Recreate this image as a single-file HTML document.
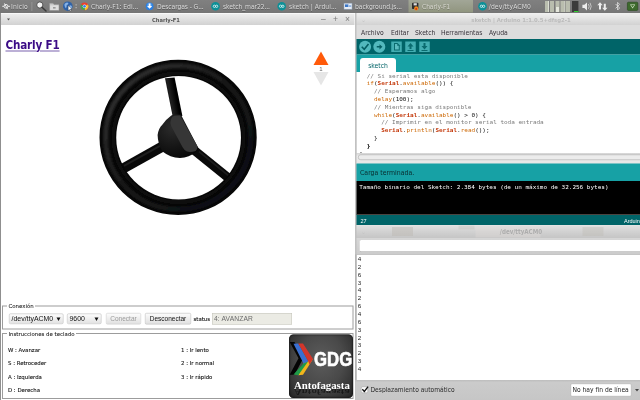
<!DOCTYPE html>
<html lang="es">
<head>
<meta charset="utf-8">
<title>Charly-F1</title>
<style>
html,body{margin:0;padding:0;width:640px;height:400px;overflow:hidden;background:#7d7d7d;}
#root{position:absolute;left:0;top:0;width:1280px;height:800px;filter:blur(.55px);transform:scale(.5);transform-origin:0 0;overflow:hidden;
  font-family:"Liberation Sans","DejaVu Sans",sans-serif;font-size:13px;color:#222;background:#7d7d7d;}
#root *{box-sizing:border-box;}
.abs{position:absolute;}
/* ---------- top panel ---------- */
#panel{left:0;top:0;width:1280px;height:26px;background:linear-gradient(#808080,#767676);}
#panel .t{position:absolute;top:4px;font-family:'DejaVu Sans Condensed','DejaVu Sans','Liberation Sans',sans-serif;font-size:13.5px;line-height:18px;color:#dcdcdc;white-space:nowrap;text-shadow:0 1px 1px rgba(0,0,0,.3);letter-spacing:0;}
#panel .ic{position:absolute;top:5px;width:16px;height:16px;border-radius:50%;}
/* ---------- left window ---------- */
#lw{left:0px;top:26px;width:711px;height:774px;background:#fff;border-left:2px solid #8f8f8f;}
.tbar{position:absolute;left:0;top:0;right:0;height:24px;background:linear-gradient(#efefef,#d2d2d2);border-top:1px solid #fafafa;}
.tbar .title{position:absolute;left:0;right:0;top:4px;text-align:center;font-family:'DejaVu Sans Condensed','DejaVu Sans','Liberation Sans',sans-serif;font-size:11.5px;font-weight:bold;color:#555;line-height:16px;}

.wb{top:0;font-size:17px;line-height:22px;color:#7a7a7a;font-weight:normal;}
.h1{font-family:'DejaVu Sans Condensed','DejaVu Sans','Liberation Sans',sans-serif;font-size:23.2px;line-height:30px;font-weight:bold;color:#3b0b86;text-decoration:underline;text-decoration-thickness:2px;text-decoration-color:#7a62ad;text-underline-offset:3px;letter-spacing:-.35px;}
.fs{margin:0;padding:0;border:2px groove #c8c8c8;border:2px solid #9c9c9c;}
.fs legend{font-family:'DejaVu Sans Condensed','DejaVu Sans','Liberation Sans',sans-serif;font-size:12px;line-height:14px;padding:0 3px;margin-left:8px;color:#1c1c1c;background:#fff;-webkit-text-stroke:.15px #1c1c1c;}
.sel{height:21px;border:1px solid #b4b4b4;border-radius:3px;background:linear-gradient(#fdfdfd,#e2e2e2);font-size:13.9px;line-height:19px;padding-left:4px;color:#111;white-space:nowrap;}
.sel i{position:absolute;right:5px;top:7px;width:0;height:0;border-left:4px solid transparent;border-right:4px solid transparent;border-top:7px solid #111;}
.btn{height:23px;border:1px solid #b0b0b0;border-radius:3px;background:linear-gradient(#fcfcfc,#e0e0e0);font-size:13px;line-height:21px;text-align:center;color:#111;white-space:nowrap;}
.btn.dis{color:#9a9a9a;border-color:#c4c4c4;}
.inp{height:23px;border:1px solid #c2c2b8;background:#ebebe4;font-size:13.4px;line-height:21px;padding-left:3px;color:#6a6a6a;white-space:nowrap;letter-spacing:.25px;}
.ins{font-family:'DejaVu Sans Condensed','DejaVu Sans','Liberation Sans',sans-serif;font-size:12px;line-height:16px;color:#141414;white-space:nowrap;-webkit-text-stroke:.22px #141414;}
#gdg{border-radius:9px;background:radial-gradient(ellipse at 50% 40%,#5c5c5c 0%,#494949 50%,#303030 85%,#1f1f1f 100%);overflow:hidden;box-shadow:inset 0 0 3px 1px #111;}

#menu{background:#dddddd;}
#menu span{position:absolute;top:6px;font-family:'DejaVu Sans Condensed','DejaVu Sans','Liberation Sans',sans-serif;font-size:13.5px;line-height:16px;color:#353038;}
#code{left:719px;top:143.5px;margin:0;font-family:"DejaVu Sans Mono","Liberation Mono",monospace;font-size:12px;line-height:15.62px;color:#111;}
#code{-webkit-text-stroke:0;} #code .c{color:#7a7a7a;-webkit-text-stroke:0;} #code .k{color:#cc6600;} #code b{color:#c4390b;font-weight:bold;-webkit-text-stroke:0;}
#cons{left:718.5px;top:365px;margin:0;font-family:"DejaVu Sans Mono","Liberation Mono",monospace;font-size:12px;line-height:16px;color:#fff;}
#ser{left:715.5px;top:510.5px;margin:0;font-family:"Liberation Sans",sans-serif;font-size:12.5px;line-height:15.71px;color:#222;}
</style>
</head>
<body>
<div id="root">

<!-- TOP PANEL -->
<div id="panel" class="abs">
  <div class="abs" style="left:817px;top:0;width:129px;height:25px;background:linear-gradient(#a2a697,#90957f);"></div>
  <svg class="abs" style="left:0;top:0" width="1280" height="26" viewBox="0 0 640 13">
    <!-- xfce/xubuntu logo -->
    <g fill="none" stroke="#f2f2f2" stroke-width=".9"><circle cx="6" cy="6.3" r="1.9"/><path d="M2.2,6.3 H4 M8,6.3 H10 M4.4,3.4 L7.6,9.2"/></g>
    <rect x="31.5" y="2" width=".8" height="9" fill="#9a9a9a"/>
    <!-- magnifier -->
    <circle cx="39.8" cy="5" r="3.1" fill="#f4f4f4" stroke="#4a4a4a" stroke-width=".9"/><path d="M42,7.3 L46,11" stroke="#3a3a3a" stroke-width="1.5" stroke-linecap="round"/>
    <!-- folder -->
    <path d="M49.5,3.2 h3.5 l1,1.2 h5 v6 h-9.5 z" fill="#c9c9c9" stroke="#8e8e8e" stroke-width=".5"/><rect x="50.2" y="5.4" width="8.2" height="4.6" fill="#dedede"/><rect x="53" y="7" width="2.6" height="1.6" fill="#9a9a9a"/>
    <!-- globe -->
    <circle cx="67.8" cy="6.2" r="4.8" fill="#2f62a8"/><path d="M64.5,4 q2,-2.4 4,-1 q-.5,2 -2,2.4 q.6,1.6 -.8,2.8 q-1.6,-1.4 -1.2,-4.2z M69.5,5.5 q2,-.6 2.6,1.4 q-.8,2 -2.2,2.4 q-.9,-1.8 -.4,-3.8z" fill="#86b2e6"/><path d="M68.2,5.6 l3.6,3.4 -1.6,.1 .9,1.7 -.8,.4 -.9,-1.7 -1.2,1z" fill="#fff" stroke="#222" stroke-width=".3"/>
    <rect x="75.6" y="4.4" width="1" height="1" fill="#d8d8d8"/><rect x="75.6" y="7.2" width="1" height="1" fill="#d8d8d8"/>
    <!-- chrome -->
    <circle cx="84.5" cy="6.3" r="3.9" fill="#e8412f"/><path d="M84.5,6.3 L81.1,4.4 A3.9,3.9 0 0,0 85,10.2 Z" fill="#3aa757"/><path d="M84.5,6.3 L85,10.2 A3.9,3.9 0 0,0 87.9,4.4 Z" fill="#f7c52c"/><circle cx="84.5" cy="6.3" r="1.8" fill="#fff"/><circle cx="84.5" cy="6.3" r="1.4" fill="#3b7ded"/>
    <!-- download -->
    <circle cx="149.6" cy="6.3" r="3.9" fill="#2c7fe0"/><circle cx="149.6" cy="5.4" r="2.6" fill="#5aa6f4" opacity=".6"/><path d="M148.7,3.6 h1.8 v2.4 h1.6 l-2.5,2.8 -2.5,-2.8 h1.6z" fill="#fff"/>
    <!-- arduino icons -->
    <g id="ard"><circle cx="215.5" cy="6.3" r="4.3" fill="#0c9097"/><path d="M213.2,6.3 a1.1,1.1 0 1,1 2.3,0 a1.1,1.1 0 1,0 2.3,0 a1.1,1.1 0 1,0 -2.3,0 a1.1,1.1 0 1,1 -2.3,0z" fill="none" stroke="#fff" stroke-width=".7"/></g>
    <use href="#ard" x="66.2"/><use href="#ard" x="267"/>
    <!-- background.js file icon -->
    <rect x="344" y="3.2" width="8" height="6" fill="#e8eef6" stroke="#8fa3bd" stroke-width=".5"/><rect x="345" y="4.4" width="3.4" height="2.6" fill="#3c78c8"/><rect x="349" y="5.6" width="2.2" height=".9" fill="#3c78c8"/>
    <!-- charly icon -->
    <rect x="412" y="2.8" width="6.4" height="6.2" rx=".8" fill="#2e2e2e"/><rect x="413.6" y="3.2" width="3.2" height="2.2" fill="#dcdcdc"/><circle cx="416.2" cy="8.4" r="2.1" fill="#f08a1a"/><circle cx="416.2" cy="8.9" r=".9" fill="#c8281e"/>
    <!-- system monitors -->
    <g fill="#b9bdae"><rect x="545" y="1" width="4" height="11"/><rect x="550" y="1" width="4" height="11"/><rect x="555.5" y="1" width="4" height="11"/><rect x="560.5" y="1" width="4" height="11"/><rect x="565.5" y="1" width="4.5" height="11"/></g>
    <g fill="#e4e6dc"><rect x="556" y="7" width="3" height="5"/><rect x="548.2" y="1" width=".8" height="11"/><rect x="564" y="1" width=".6" height="11"/></g>
    <rect x="572" y="1" width="6.4" height="11" fill="#3b3b3b"/><rect x="574" y="11" width="4.4" height="1" fill="#2fd02f"/>
    <!-- volume -->
    <path d="M582.4,4.8 h2 l2.6,-2.4 v8 l-2.6,-2.4 h-2z" fill="#ececec"/><path d="M588.4,4 q1.6,2.4 0,4.8 M590,2.8 q2.4,3.6 0,7.2" fill="none" stroke="#d6d6d6" stroke-width=".8"/>
    <!-- network arrows -->
    <path d="M600,2.2 l2.7,3 h-1.7 v4.2 h-2 v-4.2 h-1.7z" fill="#ededed"/><path d="M604.8,10.8 l-2.7,-3 h1.7 v-4 h2 v4 h1.7z" fill="#ededed"/>
    <!-- bluetooth -->
    <path d="M615.6,4 l4,4 -2,2 v-7.6 l2,2 -4,4" fill="none" stroke="#e4e4e4" stroke-width=".8"/>
    <!-- green battery/indicator -->
    <rect x="627.4" y="2.2" width="10.4" height="8.2" rx="1" fill="#3d6a2c" stroke="#27471c" stroke-width=".6"/><path d="M630,4.6 h5.2 l-2.6,4z" fill="#dfe9d6"/><path d="M631,4.9 h3.2 l-1.6,2.5z" fill="#4a7a36"/>
  </svg>

  <span class="t" style="left:22px;letter-spacing:.25px">Inicio</span>
  <span class="t" style="left:182px;letter-spacing:-.12px">Charly-F1: Edi...</span>
  <span class="t" style="left:314px;letter-spacing:-.2px">Descargas - G...</span>
  <span class="t" style="left:446px;letter-spacing:-.2px">sketch_mar22...</span>
  <span class="t" style="left:578px;letter-spacing:.05px">sketch | Ardui...</span>
  <span class="t" style="left:710px;letter-spacing:-.2px">background.js...</span>
  <span class="t" style="left:844px;letter-spacing:-.22px;color:#d6d6ce;text-shadow:0 1px 1px rgba(0,0,0,.2)">Charly-F1</span>
  <span class="t" style="left:977.5px;letter-spacing:.2px">/dev/ttyACM0</span>
</div>

<!-- LEFT WINDOW -->
<div id="lw" class="abs"></div>
<div class="tbar abs" style="left:2px;top:26px;width:708px;"><div class="title" style="padding-right:48px">Charly-F1</div>
  <span class="abs" style="left:11.5px;top:10px;width:0;height:0;border-left:3.5px solid transparent;border-right:3.5px solid transparent;border-top:4.5px solid #555;"></span>
  <span class="abs wb" style="left:640px;">&#8211;</span><span class="abs wb" style="left:664px;">+</span><span class="abs wb" style="left:688px;">&#215;</span>
</div>

<a class="abs h1" style="left:11px;top:74.5px;">Charly F1</a>

<!-- steering wheel -->
<svg class="abs" style="left:180px;top:100px;" width="360" height="350" viewBox="90 50 180 175">
  <defs>
    <linearGradient id="rhl" gradientUnits="userSpaceOnUse" x1="115" y1="75" x2="245" y2="205"><stop offset="0" stop-color="#303030"/><stop offset=".5" stop-color="#161616"/><stop offset="1" stop-color="#0c0e16"/></linearGradient><filter id="soft" x="-5%" y="-5%" width="110%" height="110%"><feGaussianBlur stdDeviation=".9"/></filter><radialGradient id="hubg" cx=".35" cy=".3" r=".8"><stop offset="0" stop-color="#2b2b2b"/><stop offset=".6" stop-color="#141414"/><stop offset="1" stop-color="#060606"/></radialGradient>
    <linearGradient id="spk" gradientUnits="userSpaceOnUse" x1="165" y1="96" x2="176" y2="94"><stop offset="0" stop-color="#000"/><stop offset=".45" stop-color="#1f1f1f"/><stop offset="1" stop-color="#000"/></linearGradient>
  </defs>
  <!-- spokes -->
  <path d="M165,78.2 L174.6,77.6 L182.4,116 L172.8,117 Z" fill="url(#spk)"/>
  <line x1="166" y1="144.5" x2="122" y2="169.1" stroke="#090909" stroke-width="10.2"/>
  <line x1="160" y1="145.8" x2="124" y2="165.9" stroke="#1e1e1e" stroke-width="2"/>
  <line x1="192" y1="148.4" x2="231" y2="180.1" stroke="#090909" stroke-width="9"/>
  <line x1="199" y1="151.6" x2="229" y2="176" stroke="#1c1c1c" stroke-width="1.8"/>
  <!-- ring -->
  <path fill="#070707" fill-rule="evenodd" d="M99.5,137.4 a78.6,77.6 0 1,0 157.2,0 a78.6,77.6 0 1,0 -157.2,0 Z M116.2,137.7 a62.4,61.7 0 1,1 124.8,0 a62.4,61.7 0 1,1 -124.8,0 Z"/>
  <ellipse cx="178.2" cy="137.5" rx="72.6" ry="71.7" fill="none" stroke="url(#rhl)" stroke-width="5" filter="url(#soft)"/>
  <ellipse cx="178.5" cy="137.7" rx="65.2" ry="64.5" fill="none" stroke="#121212" stroke-width="2.4" filter="url(#soft)"/>
  <!-- hub -->
  <path fill="url(#hubg)" d="M171.3,115.6 Q173,114 181,114.8 L198.6,148.6 Q197.5,151.5 196.6,151.8 Q189,157.8 180,158.1 Q170,157.6 162.5,151.6 Q157.8,144 157.6,135 Q158.6,128 162.5,124.5 Q166,119.5 171.3,115.6 Z"/>
  <path fill="#363636" d="M172.4,116.8 Q174,115.2 180,115.4 L197.6,146.6 Q197.4,149.6 195.6,150.9 Q191,152.4 187,151.6 Q184,150 182.6,147.2 L171.2,126.2 Q169.8,122 170.9,120 Q171.2,118 172.4,116.8 Z"/>
</svg>

<!-- speed indicator -->
<svg class="abs" style="left:620px;top:100px;" width="44" height="76" viewBox="0 0 44 76">
  <polygon points="22,3 37,30 7,30" fill="#ff5a0a"/>
  <polygon points="7,44 37,44 22,71" fill="#e6e6e6"/>
  <text x="22" y="41.5" font-size="12" text-anchor="middle" fill="#666" font-family="Liberation Sans, sans-serif">1</text>
</svg>

<!-- Conexion fieldset -->
<fieldset class="abs fs" style="left:4px;top:605px;width:703px;height:54px;"><legend>Conexi&oacute;n</legend></fieldset>
<div class="abs sel" style="left:18px;top:627px;width:109px;">/dev/ttyACM0<i></i></div>
<div class="abs sel" style="left:134px;top:627px;width:69px;">9600<i></i></div>
<div class="abs btn dis" style="left:212px;top:626px;width:70px;">Conectar</div>
<div class="abs btn" style="left:290px;top:626px;width:92px;">Desconectar</div>
<span class="abs ins" style="left:387px;top:630px;">status</span>
<div class="abs inp" style="left:424px;top:626px;width:160px;">4: AVANZAR</div>

<!-- Instrucciones fieldset -->
<fieldset class="abs fs" style="left:4px;top:660px;width:703px;height:138px;"><legend>Instrucciones de teclado</legend></fieldset>
<span class="abs ins" style="left:16px;top:691px;">W : Avanzar</span>
<span class="abs ins" style="left:16px;top:718px;">S : Retroceder</span>
<span class="abs ins" style="left:16px;top:745px;">A : Izquierda</span>
<span class="abs ins" style="left:16px;top:772px;">D : Derecha</span>
<span class="abs ins" style="left:362px;top:691px;">1 : Ir lento</span>
<span class="abs ins" style="left:362px;top:718px;">2 : Ir normal</span>
<span class="abs ins" style="left:362px;top:745px;">3 : Ir r&aacute;pido</span>

<!-- GDG logo -->
<div class="abs" id="gdg" style="left:578px;top:669px;width:128px;height:127px;">
  <svg width="128" height="127" viewBox="0 0 128 127" style="position:absolute;left:0;top:0">
    <polygon points="1.4,15 11,15 28.5,47.6 11,80.5 1.4,80.5 19,47.6" fill="#050505"/>
    <polygon points="29,58 38.5,53.5 48,49 28,80.5 18.5,81.5" fill="#f1b51c"/>
    <polygon points="29,58 38.5,53.5 18.5,81.5 9,80" fill="#1f9a48"/>
    <polygon points="9,18.5 18.5,18 38.5,53.5 29,58" fill="#3a6fd0"/>
    <polygon points="18.5,18 28,18 48,49 41,60 38.5,53.5" fill="#d3362b"/>
  </svg>
  <span class="abs" style="left:50px;top:29px;font-size:39px;line-height:40px;font-weight:bold;color:#fff;transform:scaleX(.86);transform-origin:0 0;white-space:nowrap;-webkit-text-stroke:1.2px #fff;">GDG</span>
  <span class="abs" style="left:10px;top:88px;font-size:22.5px;line-height:26px;font-weight:bold;color:rgba(0,0,0,.55);font-family:'Liberation Serif',serif;transform:scale(.96,-.75);transform-origin:0 21px;white-space:nowrap;" aria-hidden="true">Antofagasta</span>
  <span class="abs" style="left:10px;top:88px;font-size:22.5px;line-height:26px;font-weight:bold;color:#fff;font-family:'Liberation Serif',serif;transform:scaleX(.96);transform-origin:0 0;white-space:nowrap;">Antofagasta</span>
</div>

<!-- RIGHT: ARDUINO WINDOW -->
<div class="abs" style="left:709px;top:26px;width:4px;height:774px;background:linear-gradient(90deg,#fff,#b5b5b5 60%,#c9c9c9);"></div>
<div class="abs" id="rw" style="left:713px;top:26px;width:567px;height:774px;background:#dcdcdc;"></div>
<div class="tbar abs" style="left:713px;top:26px;width:567px;"><div class="title" style="color:#bbbbbb;width:658px;right:auto;font-size:11.9px;">sketch | Arduino 1:1.0.5+dfsg2-1</div>
  <span class="abs" style="left:9px;top:5px;font-size:12px;color:#c4c4c4;">&#8964;</span>
</div>
<div class="abs" id="menu" style="left:713px;top:50px;width:567px;height:28px;">
  <span style="left:9px">Archivo</span><span style="left:69px">Editar</span><span style="left:117px">Sketch</span><span style="left:169px">Herramientas</span><span style="left:265px">Ayuda</span>
</div>
<div class="abs" style="left:713px;top:78px;width:567px;height:31px;background:#006468;"></div>
<svg class="abs" style="left:713px;top:78px;" width="160" height="32" viewBox="0 0 160 32">
  <g fill="#52b9bd">
    <circle cx="17.2" cy="15.6" r="12"/><circle cx="45.6" cy="15.6" r="12"/>
  </g>
  <g fill="#43aeb2">
    <rect x="69.5" y="5" width="21" height="21"/><rect x="97.5" y="5" width="21" height="21"/><rect x="125.5" y="5" width="21" height="21"/>
  </g>
  <g fill="none" stroke="#045e62" stroke-width="3.2">
    <path d="M10.5,15.5 L15.5,20.5 L24,10"/>
    <path d="M40.5,15.6 H48"/>
  </g>
  <path d="M46,10.4 L51.8,15.6 L46,20.8 Z" fill="#045e62"/>
  <g fill="#0a6b6f">
    <path d="M75,8 h7 l4.5,4.5 v10.5 h-11.5 z"/>
    <path d="M108,8 l6,7 h-4 v5 h-4 v-5 h-4 z M102,22 h12 v2 h-12 z"/>
    <path d="M136,21 l6,-7 h-4 v-6 h-4 v6 h-4 z M130,22 h12 v2 h-12 z"/>
  </g>
  <path d="M77,10 h4.5 v3.5 h3 v7.5 h-7.500 z" fill="#5cbcc0"/>
</svg>
<div class="abs" style="left:713px;top:109px;width:567px;height:35px;background:#17a1a5;"></div>
<div class="abs" style="left:720px;top:116px;width:72px;height:30px;background:#fff;border-radius:6px 6px 0 0;font-family:'DejaVu Sans Condensed','DejaVu Sans','Liberation Sans',sans-serif;font-size:13.5px;line-height:28px;text-align:center;color:#006468;">sketch</div>
<div class="abs" style="left:713px;top:144px;width:567px;height:162px;background:#fff;border-left:1px solid #c4c4c4;"></div>
<pre class="abs" id="code">  <span class="c">// Si serial esta disponible</span>
  <span class="k">if</span>(<b>Serial</b>.<span class="k">available</span>()) {
    <span class="c">// Esperamos algo</span>
    <span class="k">delay</span>(100);
    <span class="c">// Mientras siga disponible</span>
    <span class="k">while</span>(<b>Serial</b>.<span class="k">available</span>() &gt; 0) {
      <span class="c">// Imprimir en el monitor serial toda entrada</span>
      <b>Serial</b>.<span class="k">println</span>(<b>Serial</b>.<span class="k">read</span>());
    }
  <b style="color:#000">}</b>
}</pre>
<div class="abs" style="left:713px;top:306px;width:567px;height:22px;background:linear-gradient(#d4d4d4,#ececec 30%,#e6e6e6);"></div>
<div class="abs" style="left:716px;top:309px;width:580px;height:11px;background:#ececec;border:1.5px solid #9f9f9f;border-radius:6px;"></div>
<div class="abs" style="left:713px;top:327px;width:567px;height:35px;background:#17a1a5;font-family:'DejaVu Sans Condensed','DejaVu Sans','Liberation Sans',sans-serif;font-size:13.8px;line-height:35px;padding-left:7px;color:#0a2c2e;">Carga terminada.</div>
<div class="abs" style="left:713px;top:362px;width:567px;height:66px;background:#000;"></div>
<pre class="abs" id="cons">Tama&ntilde;o binario del Sketch: 2.384 bytes (de un m&aacute;ximo de 32.256 bytes)</pre>
<div class="abs" style="left:713px;top:428px;width:567px;height:22px;background:#006468;border-top:2px solid #3a3a3a;font-size:11px;line-height:22px;color:#fff;padding-left:8px;border-top-color:#4a4440;">27<span style="position:absolute;left:535px;white-space:nowrap;">Arduino Uno on /dev/ttyACM0</span></div>

<!-- SERIAL MONITOR -->
<div class="tbar abs" style="left:713px;top:450px;width:567px;height:27px;background:linear-gradient(#e0e0e0,#d2d2d2 45%,#c4c4c4);border-top-color:#e8e8e8;"><div class="title" style="color:#adadad;width:658px;right:auto;top:5px;font-size:12.4px;z-index:2;">/dev/ttyACM0</div>
  <span class="abs" style="left:9px;top:5px;font-size:12px;color:#c4c4c4;">&#8964;</span>
  <span class="abs" style="left:71px;top:3px;width:42px;height:18px;background:rgba(190,186,180,.5);"></span>
  <span class="abs" style="left:204px;top:0px;width:32px;height:8px;background:rgba(190,186,180,.3);"></span><span class="abs" style="left:238px;top:2px;width:130px;height:22px;background:rgba(225,222,218,.35);"></span>
  <span class="abs" style="left:452px;top:3px;width:42px;height:18px;background:rgba(190,186,180,.38);"></span>
</div>
<div class="abs" style="left:713px;top:476px;width:567px;height:34px;background:linear-gradient(#d6d6d6,#cbcbcb);"></div>
<div class="abs" style="left:719px;top:479px;width:570px;height:24.5px;background:#fff;border:1px solid #a4a4a4;border-top-color:#8c8c8c;border-radius:3px;"></div>
<div class="abs" style="left:711px;top:509px;width:569px;height:251px;background:#fff;border-left:2.5px solid #8a8a8a;border-top:1px solid #a4a4a4;"></div>
<pre class="abs" id="ser">4
2
6
3
4
2
6
4
6
3
2
3
2
3
4</pre>
<div class="abs" style="left:711px;top:759.5px;width:569px;height:41px;background:linear-gradient(#bdbdbd,#cbcbcb 12%,#c6c6c6);"></div>
<div class="abs" style="left:721.5px;top:773px;width:14px;height:13px;background:#fff;border:1px solid #9a9a9a;border-radius:3px;"></div>
<svg class="abs" style="left:722px;top:771px;" width="16" height="16" viewBox="0 0 18 18"><path d="M3,8.5 L7.5,13.5 L16,2.5" fill="none" stroke="#111" stroke-width="3"/></svg>
<span class="abs" style="left:741px;top:770px;font-family:'DejaVu Sans Condensed','DejaVu Sans','Liberation Sans',sans-serif;font-size:13.3px;line-height:18px;color:#2c2c2c;">Desplazamiento autom&aacute;tico</span>
<div class="abs" style="left:1141px;top:767px;width:122px;height:26px;background:#fff;border:1px solid #a6a6a6;border-radius:3px;font-family:'DejaVu Sans Condensed','DejaVu Sans','Liberation Sans',sans-serif;font-size:13.3px;line-height:24px;padding-left:3px;color:#222;white-space:nowrap;">No hay fin de l&iacute;nea</div>
<span class="abs" style="left:1270px;top:778px;width:0;height:0;border-left:4px solid transparent;border-right:4px solid transparent;border-top:5px solid #444;"></span>

</div>
</body>
</html>
